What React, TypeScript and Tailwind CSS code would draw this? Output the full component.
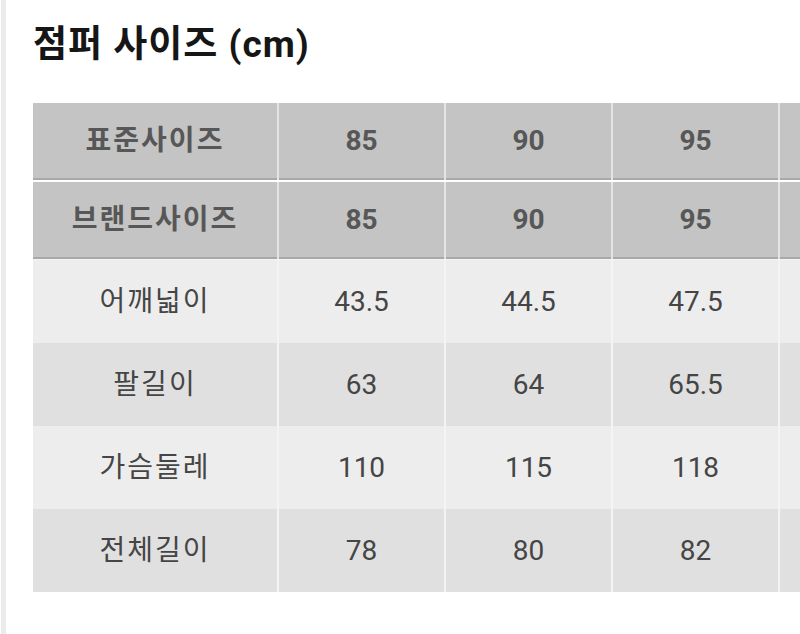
import React from 'react';

const font = { fontFamily: 'Roboto, "Noto Sans CJK KR", sans-serif' };

const headers = [
  ['표준사이즈', '85', '90', '95', ''],
  ['브랜드사이즈', '85', '90', '95', ''],
];

const rows = [
  ['어깨넓이', '43.5', '44.5', '47.5', ''],
  ['팔길이', '63', '64', '65.5', ''],
  ['가슴둘레', '110', '115', '118', ''],
  ['전체길이', '78', '80', '82', ''],
];

function HeaderRow({ cells, first }: { cells: string[]; first?: boolean }) {
  return (
    <div className={`flex gap-[2px] bg-[#e4e4e4] ${first ? '' : 'mt-[2px]'}`}>
      {cells.map((c, i) => (
        <div
          key={i}
          className={`${i === 0 ? 'w-[244px] tracking-[2px]' : 'w-[165px]'} shrink-0 h-[77px] flex items-center justify-center bg-[#c4c4c4] border-b-2 border-[#a9a9a9] text-[28px] font-bold text-[#575757]`}
        >
          {c}
        </div>
      ))}
    </div>
  );
}

function DataRow({ cells, odd }: { cells: string[]; odd: boolean }) {
  return (
    <div className="flex gap-[2px] bg-[#f4f4f4]">
      {cells.map((c, i) => (
        <div
          key={i}
          className={`${i === 0 ? 'w-[244px] tracking-[2px]' : 'w-[165px]'} shrink-0 h-[83px] flex items-center justify-center ${odd ? 'bg-[#e0e0e0]' : 'bg-[#ededed]'} text-[28px] text-[#454545]`}
        >
          {c}
        </div>
      ))}
    </div>
  );
}

export default function App() {
  return (
    <div className="flex h-[634px] w-[800px] overflow-hidden bg-white" style={font}>
      <div className="ml-[1px] w-[5px] shrink-0 bg-[#ebebeb]" />
      <div className="pl-[27px] pt-[22px] min-w-0">
        <h1 className="text-[37px] leading-[46px] font-bold tracking-[1px] text-[#161616] whitespace-nowrap">
          점퍼 사이즈 (cm)
        </h1>
        <div className="mt-[35px] w-max">
          {headers.map((h, i) => (
            <HeaderRow key={i} cells={h} first={i === 0} />
          ))}
          <div className="h-[1px] bg-[#f4f4f4]" />
          {rows.map((r, i) => (
            <DataRow key={i} cells={r} odd={i % 2 === 1} />
          ))}
        </div>
      </div>
    </div>
  );
}
